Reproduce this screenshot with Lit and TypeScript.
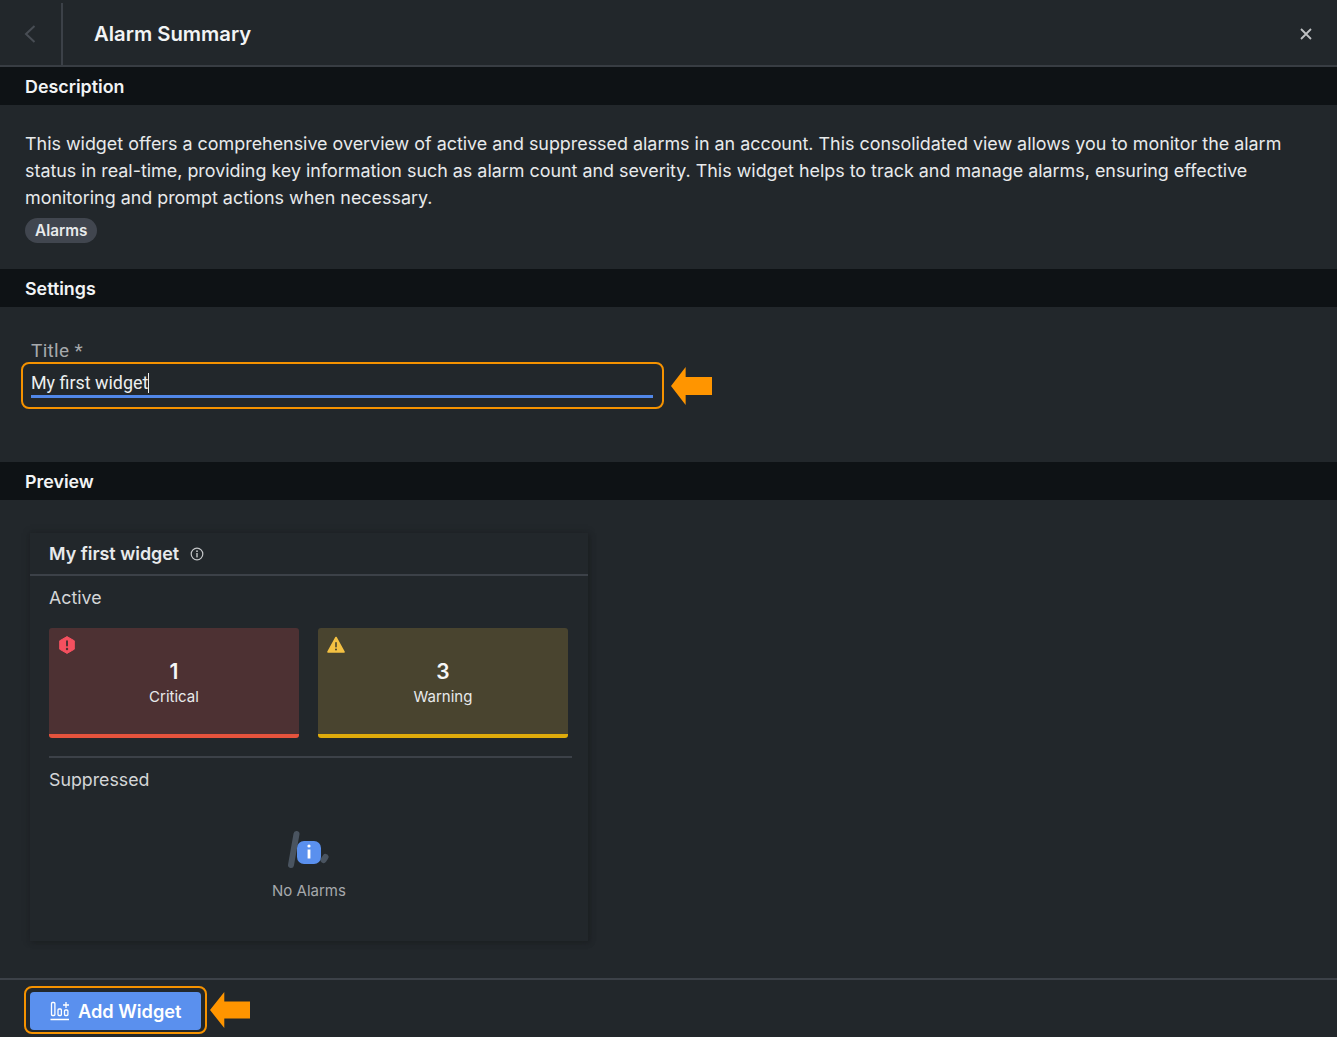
import { LitElement, html, css, svg } from "lit";
import { customElement, property } from "lit/decorators.js";

const arrow = svg`<svg class="arrow" width="41" height="38" viewBox="0 0 42 38" preserveAspectRatio="none"><path d="M0 19 L15 0 V10 H42 V28 H15 V38 Z" fill="#ff9500"/></svg>`;

@customElement("section-bar")
export class SectionBar extends LitElement {
  static override styles = css`
    div {
      height: 38px;
      box-sizing: border-box;
      padding: 1px 0 0 25px;
      display: flex;
      align-items: center;
      background: #0e1215;
      color: #f2f4f5;
      font: 600 17.85px/24px Inter, sans-serif;
    }
  `;

  @property()
  label: string = "";

  override render() {
    return html`<div>${this.label}</div>`;
  }
}

@customElement("alarm-tile")
export class AlarmTile extends LitElement {
  static override styles = css`
    :host {
      display: block;
      width: 250px;
    }
    .tile {
      position: relative;
      height: 110px;
      box-sizing: border-box;
      border-radius: 3px;
      border-bottom: 4px solid;
      display: flex;
      flex-direction: column;
      align-items: center;
      padding-top: 30px;
      font-family: Inter, sans-serif;
      color: #e8eaeb;
    }
    .critical {
      background: #4d3133;
      border-color: #e5533d;
    }
    .warning {
      background: #49442f;
      border-color: #dfab0b;
    }
    .count {
      font-size: 21px;
      line-height: 28px;
      font-weight: 600;
      color: #f6f7f7;
    }
    .name {
      font-size: 15px;
      line-height: 22px;
    }
    svg {
      position: absolute;
      left: 9px;
      top: 8px;
    }
  `;

  @property()
  kind: string = "critical";

  @property()
  count: string = "";

  @property()
  name: string = "";

  private icon() {
    if (this.kind === "critical") {
      return html`<svg width="18" height="18" viewBox="0 0 18 18">
        <path d="M9 .6 16.3 4.8V13.2L9 17.4 1.7 13.2V4.8Z" fill="#f4505f" stroke="#f4505f" stroke-linejoin="round"/>
        <rect x="8" y="4.2" width="2" height="6.4" rx="1" fill="#4d3133"/>
        <circle cx="9" cy="13" r="1.2" fill="#4d3133"/>
      </svg>`;
    }
    return html`<svg width="18" height="18" viewBox="0 0 18 18">
      <path d="M9 1.5 17 16H1Z" fill="#f4c143" stroke="#f4c143" stroke-width="1.6" stroke-linejoin="round"/>
      <rect x="8.2" y="6" width="1.6" height="5.6" rx=".8" fill="#49442f"/>
      <circle cx="9" cy="13.5" r="1" fill="#49442f"/>
    </svg>`;
  }

  override render() {
    return html`<div class="tile ${this.kind}">
      ${this.icon()}
      <div class="count">${this.count}</div>
      <div class="name">${this.name}</div>
    </div>`;
  }
}

@customElement("app-root")
export class AppRoot extends LitElement {
  static override styles = css`
    :host {
      display: block;
      width: 1337px;
      height: 1038px;
      background: #fff;
      overflow: hidden;
    }
    .panel {
      height: 1037px;
      display: flex;
      flex-direction: column;
      background: #22272b;
      color: #e8eaeb;
      font-family: Inter, sans-serif;
    }
    .top {
      height: 67px;
      box-sizing: border-box;
      display: flex;
      align-items: center;
      border-bottom: 2px solid #383d43;
    }
    .back {
      width: 63px;
      height: 62px;
      margin-top: 3px;
      box-sizing: border-box;
      border-right: 2px solid #3c4148;
      display: flex;
      align-items: center;
      padding-left: 24px;
    }
    .top h1 {
      flex: 1;
      margin: 3px 0 0 31px;
      font-size: 20.25px;
      line-height: 28px;
      font-weight: 600;
      color: #f2f4f5;
    }
    .close {
      margin: 2px 25px 0 0;
      display: flex;
    }
    .desc {
      height: 164px;
      box-sizing: border-box;
      padding: 25px 25px 0;
      font-size: 17.9px;
      line-height: 27px;
      color: #e8eaeb;
    }
    .desc p {
      margin: 0;
    }
    .tag {
      display: inline-block;
      margin-top: 7px;
      padding: 0 10px;
      height: 25px;
      border-radius: 13px;
      background: #41464f;
      font-size: 15.3px;
      line-height: 25px;
      font-weight: 600;
      vertical-align: top;
    }
    .settings {
      height: 155px;
      box-sizing: border-box;
      padding: 32px 0 0 21px;
    }
    .label {
      margin: 0 0 -1px 10px;
      font: 19px/24px Roboto, sans-serif;
      letter-spacing: 0.3px;
      color: #a6a9ac;
    }
    .field-row {
      display: flex;
      align-items: center;
      gap: 7px;
    }
    .field {
      width: 643px;
      height: 47px;
      box-sizing: border-box;
      border: 2px solid #f59200;
      border-radius: 8px;
      padding: 0 9px 0 8px;
    }
    .input {
      height: 34px;
      box-sizing: border-box;
      border-bottom: 3px solid #5187e8;
      padding-top: 6px;
      font: 17.9px/26px Roboto, sans-serif;
      color: #eceeef;
      white-space: nowrap;
    }
    .caret {
      display: inline-block;
      width: 1px;
      height: 20px;
      background: #eceeef;
      vertical-align: -4px;
    }
    .preview {
      flex: 1;
      padding: 33px 0 0 30px;
    }
    .card {
      width: 558px;
      height: 408px;
      box-shadow: 0 0 6px #1d2124, 2px 2px 4px #1d2124;
      display: flex;
      flex-direction: column;
    }
    .card-head {
      height: 43px;
      box-sizing: border-box;
      padding-left: 19px;
      display: flex;
      align-items: center;
      gap: 11px;
      border-bottom: 2px solid #3c4148;
      font-size: 17.9px;
      font-weight: 600;
      color: #e8eaeb;
    }
    .sub {
      margin: 10px 0 0 19px;
      font-size: 17.8px;
      line-height: 24px;
      color: #d4d6d8;
    }
    .tiles {
      display: flex;
      gap: 19px;
      margin: 18px 0 0 19px;
    }
    .rule {
      margin: 18px 16px 0 19px;
      border-top: 2px solid #3c4148;
    }
    .empty {
      margin-top: 38px;
      display: flex;
      flex-direction: column;
      align-items: center;
      gap: 10px;
      font-size: 15px;
      line-height: 22px;
      color: #a6a9ac;
    }
    .foot {
      height: 59px;
      box-sizing: border-box;
      border-top: 2px solid #3c4148;
      padding: 6px 0 0 24px;
      display: flex;
      align-items: flex-start;
      gap: 3px;
    }
    .btn-ring {
      width: 183px;
      height: 48px;
      box-sizing: border-box;
      border: 2px solid #f59200;
      border-radius: 8px;
      padding: 4px;
    }
    .btn {
      height: 38px;
      border-radius: 4px;
      background: #5a90ee;
      color: #fff;
      display: flex;
      align-items: center;
      padding-left: 20px;
      gap: 8px;
      font-size: 18.2px;
      font-weight: 600;
    }
    .arrow {
      flex: none;
    }
    .foot .arrow {
      width: 40px;
      height: 36px;
      margin-top: 6px;
    }
  `;

  override render() {
    return html`<div class="panel">
      <div class="top">
        <div class="back">
          <svg width="12" height="18" viewBox="0 0 12 18"><path d="M10.5 1 2 9l8.5 8" fill="none" stroke="#484d54" stroke-width="2"/></svg>
        </div>
        <h1>Alarm Summary</h1>
        <div class="close">
          <svg width="12" height="12" viewBox="0 0 12 12"><path d="M1 1l10 10M11 1 1 11" stroke="#bfc1c3" stroke-width="1.8"/></svg>
        </div>
      </div>

      <section-bar label="Description"></section-bar>
      <div class="desc">
        <p>This widget offers a comprehensive overview of active and suppressed alarms in an account. This consolidated view allows you to monitor the alarm status in real-time, providing key information such as alarm count and severity. This widget helps to track and manage alarms, ensuring effective monitoring and prompt actions when necessary.</p>
        <span class="tag">Alarms</span>
      </div>

      <section-bar label="Settings"></section-bar>
      <div class="settings">
        <div class="label">Title *</div>
        <div class="field-row">
          <div class="field">
            <div class="input">My first widget<span class="caret"></span></div>
          </div>
          ${arrow}
        </div>
      </div>

      <section-bar label="Preview"></section-bar>
      <div class="preview">
        <div class="card">
          <div class="card-head">
            My first widget
            <svg width="14" height="14" viewBox="0 0 14 14">
              <circle cx="7" cy="7" r="5.8" fill="none" stroke="#c4c6c8" stroke-width="1.2"/>
              <rect x="6.3" y="6" width="1.4" height="4.4" fill="#c4c6c8"/>
              <circle cx="7" cy="4.2" r=".9" fill="#c4c6c8"/>
            </svg>
          </div>
          <div class="sub">Active</div>
          <div class="tiles">
            <alarm-tile kind="critical" count="1" name="Critical"></alarm-tile>
            <alarm-tile kind="warning" count="3" name="Warning"></alarm-tile>
          </div>
          <div class="rule"></div>
          <div class="sub">Suppressed</div>
          <div class="empty">
            <svg width="44" height="40" viewBox="0 0 44 40">
              <path d="M9.5 4 4 35" stroke="#4a5460" stroke-width="6" stroke-linecap="round"/>
              <path d="M38.5 27l-2 3" stroke="#4a5460" stroke-width="6" stroke-linecap="round"/>
              <rect x="10" y="11" width="24" height="23" rx="7" fill="#5a90ee"/>
              <rect x="20.6" y="19.5" width="2.8" height="9" fill="#fff"/>
              <circle cx="22" cy="16" r="1.6" fill="#fff"/>
            </svg>
            No Alarms
          </div>
        </div>
      </div>

      <div class="foot">
        <div class="btn-ring">
          <div class="btn">
            <svg width="20" height="20" viewBox="0 0 20 20" fill="none" stroke="#fff" stroke-width="1.3">
              <rect x="1.5" y="1.5" width="3.4" height="13" rx="1"/>
              <rect x="8" y="8" width="3.4" height="6.5" rx="1"/>
              <rect x="14.5" y="9" width="3.4" height="5.5" rx="1"/>
              <path d="M.5 18.5h18.5M16 1v6M13 4h6"/>
            </svg>
            Add Widget
          </div>
        </div>
        ${arrow}
      </div>
    </div>`;
  }
}
